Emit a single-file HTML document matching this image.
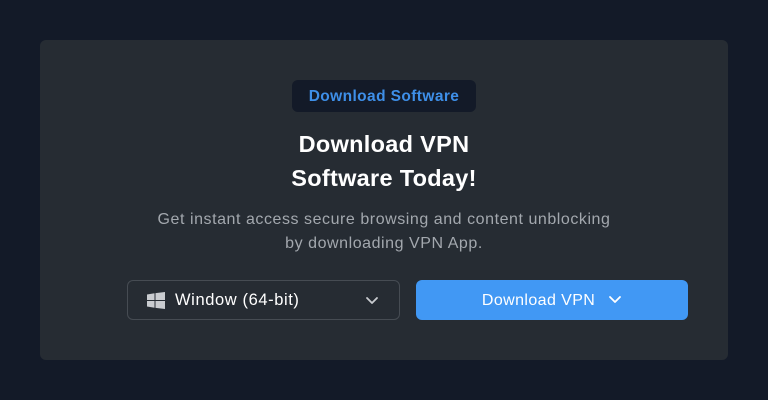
<!DOCTYPE html>
<html><head><style>
body{margin:0;width:768px;height:400px;background:#131a28;font-family:"Liberation Sans",sans-serif;position:relative;overflow:hidden}
.card{position:absolute;left:40px;top:40px;width:688px;height:320px;background:#262c33;border-radius:6px}
.badge{position:absolute;left:292px;top:80px;width:184px;height:32px;background:#131a28;border-radius:6px;color:#3e8fe8;font-size:15.5px;font-weight:bold;text-align:center;line-height:33px;letter-spacing:0.4px}
h1{position:absolute;left:0;top:127px;width:768px;margin:0;text-align:center;color:#fff;font-size:23.5px;line-height:34px;font-weight:bold;letter-spacing:0.3px}
p{position:absolute;left:0;top:208px;width:768px;margin:0;text-align:center;color:#a3a8ae;font-size:16px;line-height:24px;letter-spacing:0.55px}
.sel{position:absolute;left:127px;top:280px;width:271px;height:38px;border:1px solid #464c53;border-radius:6px;color:#fff;font-size:16.5px;letter-spacing:0.6px}
.sel span{position:absolute;left:47px;top:10px}
.btn{position:absolute;left:416px;top:280px;width:272px;height:40px;background:#4198f4;border-radius:6px;color:#fff;font-size:16px;text-align:center;line-height:41px;letter-spacing:0.4px}
</style></head><body>
<div class="card"></div>
<div class="badge">Download Software</div>
<h1>Download VPN<br>Software Today!</h1>
<p>Get instant access secure browsing and content unblocking<br>by downloading VPN App.</p>
<div class="sel">
<svg style="position:absolute;left:19px;top:11px" width="18" height="17" viewBox="0 0 18 17"><g fill="#c9ccd0"><path d="M0 2.5L7.5 1.3V8H0z"/><path d="M8.5 1.1L18 0V8H8.5z"/><path d="M0 9H7.5V15.7L0 14.5z"/><path d="M8.5 9H18V17L8.5 15.9z"/></g></svg>
<span>Window (64-bit)</span>
<svg style="position:absolute;left:237px;top:15px" width="14" height="9" viewBox="0 0 14 9"><path d="M2 2l5 5 5-5" fill="none" stroke="#c9ccd0" stroke-width="1.8" stroke-linecap="round" stroke-linejoin="round"/></svg>
</div>
<div class="btn">Download VPN <svg style="margin-left:8px;vertical-align:1px" width="14" height="9" viewBox="0 0 14 9"><path d="M2 2l5 5 5-5" fill="none" stroke="#fff" stroke-width="1.8" stroke-linecap="round" stroke-linejoin="round"/></svg></div>
</body></html>
